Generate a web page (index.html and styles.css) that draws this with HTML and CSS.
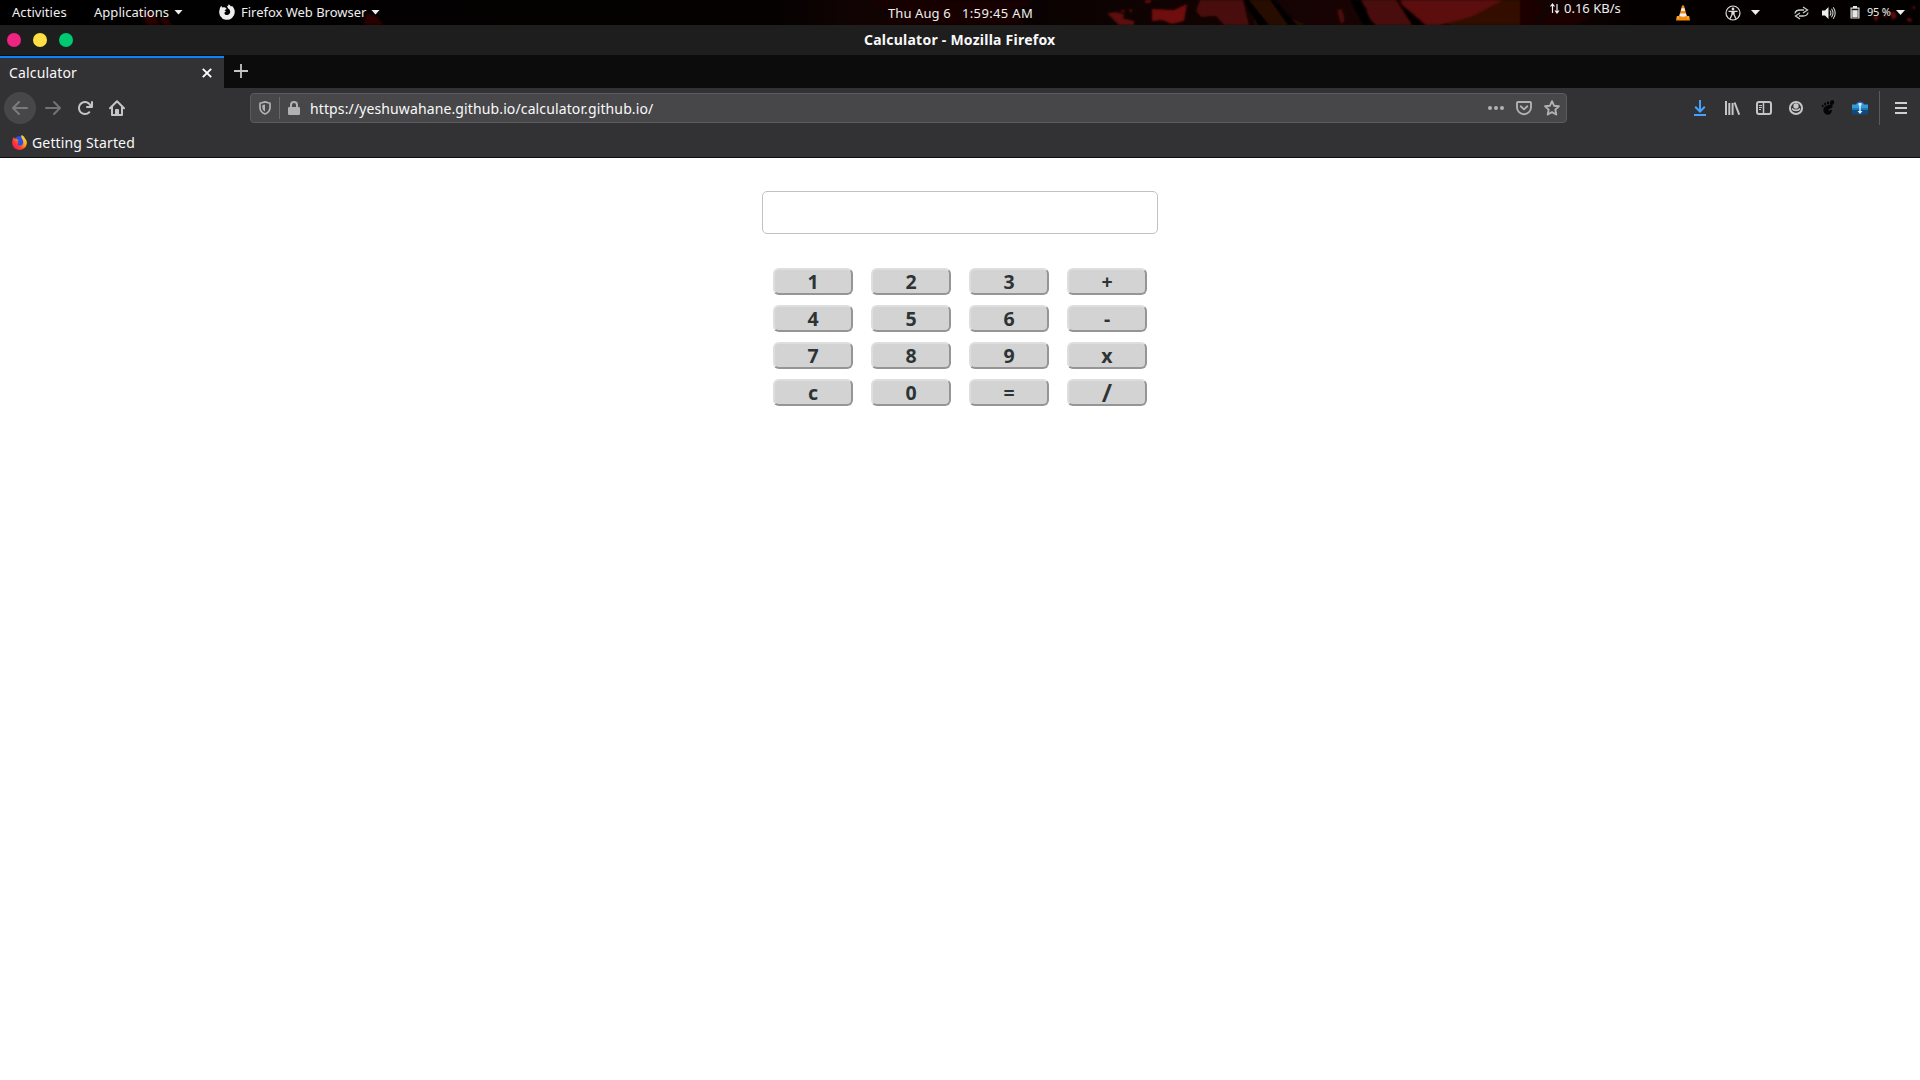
FILE: index.html
```html
<!DOCTYPE html>
<html lang="en">
<head>
<meta charset="utf-8">
<title>Calculator</title>
<link rel="stylesheet" href="styles.css">
</head>
<body>
<header class="panel">
  <svg class="wallpaper" width="1920" height="25" viewBox="0 0 1920 25" aria-hidden="true">
    <defs>
      <linearGradient id="base"><stop offset="0" stop-color="#000"/><stop offset=".4" stop-color="#050101"/><stop offset=".45" stop-color="#120303"/><stop offset=".54" stop-color="#0a0202"/><stop offset=".7" stop-color="#180303"/><stop offset=".79" stop-color="#190404"/><stop offset=".85" stop-color="#050000"/><stop offset="1" stop-color="#030000"/></linearGradient>
      <filter id="soft"><feGaussianBlur stdDeviation=".8"/></filter>
    </defs>
    <rect width="1920" height="25" fill="url(#base)"/>
    <g filter="url(#soft)">
      <path fill="#2a0505" d="M140 10l14 3 6 12h-13zM160 17l8 1 4 7h-9zM366 14l10 2 8 9h-20z"/>
      <path fill="#140302" d="M865 0h170l-20 12 10 13H880l10-12z"/>
      <path fill="#5e0d08" d="M1107 13l10-1 8 3-3 3 12 3v4h-15zM1119 11l6-1-1 3zM1128 10l4-1v4zM1146 0h6l-2 3h-6z"/>
      <path fill="#701009" d="M1152 9l22 1 13-6-3 17-12 3-10-4-10 1z"/>
      <path fill="#4a0b08" d="M1200 0h43l6 25h-25l-8-9-15 1-5-6z"/>
      <path fill="#280906" d="M1245 0h25l10 13 27 12h-52z"/>
      <path fill="#4a0a07" d="M1337 10l5-1 3 11-4 5zM1361 0h35l13 8 8 17h-51l-6-12 8-2z"/>
      <path fill="#5b0d09" d="M1400 0h103l-14 12-28 8-22 5h-23z"/>
      <path fill="#310706" d="M1503 0h17v25h-77l30-9z"/>
      <path fill="#1d0505" d="M1520 0h16l6 9-10 16h-12zM1548 12l30-2 11 8-14 7h-33z"/>
      <path fill="#000" d="M1243 0h6l20 25h-11zM1270 0h5l22 25h-9zM1350 0h11l10 20 5 5h-13zM1396 0l15 12 15 13h-14z"/>
      <path fill="#5a0f0c" d="M1890 12l5 0 2 5-5 3zM1882 16l4-2 1 4zM1911 7l4-1 0 4zM1907 18l4 0 1 4-5-1zM1873 16l6 0-3 6z"/>
    </g>
  </svg>
  <div class="panel-left">
    <span class="t-act">Activities</span>
    <span class="menu-item m-apps"><span class="t-apps">Applications</span><i class="caret"></i></span>
    <span class="menu-item m-fox">
      <svg width="16" height="16" viewBox="0 0 16 16"><path fill="#eee" d="M8 2.400C9 2 9.500 1.300 9.700.3c1 .7 1.700 1.400 2.200 2.300.5-.2.8-.5 1-.9C14.900 3.500 15.800 5.600 15.800 8A7.800 7.800 0 1 1 .7 5.300C.8 3.700 1.500 2.700 2.600 1.700c0 .8.2 1.300.6 1.800 1-.4 2-.5 3-.1L7.800 4.900 5.300 6.300c1 .2 1.500.7 1.500 1.400-1 .5-1.600.9-1.300 1.700.5 1.300 2 2 3.600 1.400 2-.7 2.500-2.900 1.700-4.600C10 4.700 9 4.500 8 2.400z"/></svg>
      <span class="t-fwb">Firefox Web Browser</span><i class="caret"></i>
    </span>
  </div>
  <div class="clock"><span class="t-date">Thu Aug 6</span><span class="t-time">1:59:45 AM</span></div>
  <div class="panel-right">
    <span class="net"><svg width="10" height="11" viewBox="0 0 10 11"><path d="M2.500 10V1M.5 3.500l2-2.500 2 2.500M7 1v9M5 7.500L7 10l2-2.500" fill="none" stroke="#eee" stroke-width="1.200"/></svg><span class="t-net">0.16 KB/s</span></span>
    <svg class="vlc" width="14" height="16" viewBox="0 0 14 16"><path fill="#f58a07" d="M.8 11h12.400l.8 4.500H0z"/><path fill="#ffad36" d="M1 11.500h2v2H1zM11 11.500h2v2h-2z"/><path fill="#f48a12" d="M6 .5h2L11 12q-4 2-8 0z"/><path fill="#eee" d="M5.500 3.200h3L9.200 6H4.800zM4 8.500h6l.7 2.500q-3.700 1.500-7.400 0z"/></svg>
    <svg class="access" width="16" height="16" viewBox="0 0 16 16"><circle cx="8" cy="8" r="7" fill="none" stroke="#ddd" stroke-width="1.200"/><circle cx="8" cy="4" r="1.400" fill="#ddd"/><path d="M3.500 6.300h9M8 6v3.500M7 6.500v3.200l-2 4M9 6.500v3.200l2 4" fill="none" stroke="#ddd" stroke-width="1.300"/></svg>
    <i class="caret c1"></i>
    <svg class="swap" width="15" height="14" viewBox="0 0 15 14"><path d="M1 7.500C1.500 4.500 4 4 6 4h4M9 1l4.500 3L9 7M14 6.500c-.5 3-3 3.500-5 3.500H5M6 7l-4.500 3L6 13" fill="none" stroke="#ccc" stroke-width="1.300"/></svg>
    <svg class="vol" width="14" height="14" viewBox="0 0 14 14"><path d="M0 4.500h3L6.500 1v12L3 9.500H0z" fill="#eee"/><path d="M8 4.500q1.800 2.500 0 5M9.500 2.800q3 4.200 0 8.400M11.200 1.200q4 5.800 0 11.600" fill="none" stroke="#ccc" stroke-width="1.100"/></svg>
    <svg class="bat" width="10" height="13" viewBox="0 0 10 13"><path d="M3 0h4v1.500h2.500v11H.5v-11H3z" fill="#e5e5e5"/><path d="M1.700 2.700h6.600v1.500H1.700z" fill="#111"/><path d="M1.700 2.700h.7v8.800h5.200V2.700h.7v9.300H1.700z" fill="#333"/></svg>
    <span class="t-bat">95 %</span><i class="caret c2"></i>
  </div>
</header>

<div class="titlebar">
  <div class="lights"><i class="close"></i><i class="min"></i><i class="max"></i></div>
  <span class="t-title">Calculator - Mozilla Firefox</span>
</div>

<div class="tabs">
  <div class="tab"><span class="t-tab">Calculator</span><svg width="10" height="10" viewBox="0 0 10 10"><path d="M.8.8l8.400 8.400M9.200.8L.8 9.200" stroke="#fff" stroke-width="1.900"/></svg></div>
  <svg class="newtab" width="14" height="14" viewBox="0 0 14 14"><path d="M7 0v14M0 7h14" stroke="#c5c5c6" stroke-width="1.800"/></svg>
</div>

<div class="toolbar">
  <div class="nav">
    <span class="back"><svg width="16" height="16" viewBox="0 0 16 16"><path fill="#7b7b7d" d="M15 7H3.414l4.293-4.293a1 1 0 0 0-1.414-1.414l-6 6a1 1 0 0 0 0 1.414l6 6a1 1 0 0 0 1.414-1.414L3.414 9H15a1 1 0 0 0 0-2z"/></svg></span>
    <svg class="fwd" width="16" height="16" viewBox="0 0 16 16"><path fill="#737375" d="M1 7h11.586L8.293 2.707a1 1 0 0 1 1.414-1.414l6 6a1 1 0 0 1 0 1.414l-6 6a1 1 0 0 1-1.414-1.414L12.586 9H1a1 1 0 0 1 0-2z"/></svg>
    <svg class="reload" width="16" height="16" viewBox="0 0 16 16"><path fill="#c5c5c6" d="M15 1a1 1 0 0 0-1 1v2.418A6.995 6.995 0 1 0 8 15a6.954 6.954 0 0 0 4.950-2.050 1 1 0 0 0-1.414-1.414A5.019 5.019 0 1 1 12.549 6H10a1 1 0 0 0 0 2h5a1 1 0 0 0 1-1V2a1 1 0 0 0-1-1z"/></svg>
    <svg class="home" width="16" height="16" viewBox="0 0 16 16"><path d="M1 8.300L8 1.300l7 7M3 7v8h10V7M7 15v-5h2v5" fill="none" stroke="#c5c5c6" stroke-width="2" stroke-linecap="round" stroke-linejoin="round"/></svg>
  </div>
  <div class="urlbar">
    <svg class="shield" width="12" height="14" viewBox="0 0 12 14"><path d="M6 .9l5 1.300v4.300c0 3-1.800 5.200-5 6.500-3.200-1.300-5-3.500-5-6.500V2.200z" fill="none" stroke="#b1b1b3" stroke-width="1.700" stroke-linejoin="round"/><path d="M6 3.500v7C4.200 9.400 3.300 8 3.300 6.200V4.100z" fill="#b1b1b3"/></svg>
    <i class="urlsep"></i>
    <svg class="lock" width="12" height="14" viewBox="0 0 12 14"><path d="M3 7V4a3 3 0 0 1 6 0v3" fill="none" stroke="#b1b1b3" stroke-width="2"/><rect y="6" width="12" height="8" rx="1.200" fill="#b1b1b3"/></svg>
    <span class="t-url">https://yeshuwahane.github.io/calculator.github.io/</span>
    <span class="urlicons">
      <svg width="16" height="16" viewBox="0 0 16 16"><g fill="#b1b1b3"><circle cx="2" cy="8" r="2"/><circle cx="8" cy="8" r="2"/><circle cx="14" cy="8" r="2"/></g></svg>
      <svg width="16" height="16" viewBox="0 0 16 16"><path d="M2 2h12q1 0 1 1v4.200a7 7 0 0 1-14 0V3q0-1 1-1z" fill="none" stroke="#b1b1b3" stroke-width="1.900"/><path d="M4.700 6.300L8 9.400l3.300-3.100" fill="none" stroke="#b1b1b3" stroke-width="1.900" stroke-linecap="round" stroke-linejoin="round"/></svg>
      <svg width="16" height="16" viewBox="0 0 16 16"><path d="M8 1.200l2 4.500 4.900.5-3.600 3.400 1 4.900L8 12.100l-4.300 2.400 1-4.900L1.100 6.200 6 5.700z" fill="none" stroke="#b1b1b3" stroke-width="1.900" stroke-linejoin="round"/></svg>
    </span>
  </div>
  <div class="tools">
    <svg width="16" height="16" viewBox="0 0 16 16"><path d="M8 0v11M3.200 6.700L8 11.500l4.800-4.800M2 15h12" fill="none" stroke="#45a1ff" stroke-width="2" /></svg>
    <svg width="16" height="16" viewBox="0 0 16 16"><path d="M2 1v14M5.300 3v12M8.600 3v12" stroke="#c5c5c6" stroke-width="2"/><path d="M10.600 2.500L15.200 14.700" stroke="#c5c5c6" stroke-width="2"/></svg>
    <svg width="16" height="16" viewBox="0 0 16 16"><rect x="1" y="2" width="14" height="12" rx="2" fill="none" stroke="#c5c5c6" stroke-width="2"/><path d="M7.500 2v12" stroke="#c5c5c6" stroke-width="1.500"/><path d="M3 5.500h3M3 7.500h3M3 9.500h2" stroke="#c5c5c6"/></svg>
    <svg width="16" height="16" viewBox="0 0 16 16"><circle cx="8" cy="8" r="6.100" fill="none" stroke="#c5c5c6" stroke-width="2"/><circle cx="8" cy="6" r="2.700" fill="#c5c5c6"/><path d="M4 8.500a4.500 3.600 0 0 0 8 0" fill="none" stroke="#c5c5c6" stroke-width="1.700"/></svg>
    <svg width="16" height="16" viewBox="0 0 16 16"><path fill="#050505" d="M7 5.600c3-1.500 6-.8 5.700 1.200-.3 1.600-2.800 1.500-4 2.700-.8 1 .5 1.500 1.600.7 1-.7 2-.2 1.600.8-.5 2.200-2 3.800-4 3.800-2.500 0-4.500-2.300-4.500-5C3.400 7.800 4.800 6.500 7 5.600z"/><ellipse cx="12" cy="2.600" rx="2" ry="2.600" transform="rotate(25 12 2.600)" fill="#050505"/><ellipse cx="8" cy="2.900" rx="1.100" ry="1.700" fill="#050505"/><ellipse cx="5.100" cy="4.100" rx="1" ry="1.500" fill="#050505"/><ellipse cx="2.700" cy="6" rx=".9" ry="1.300" fill="#050505"/></svg>
    <svg width="16" height="16" viewBox="0 0 16 16"><path fill="#2468d8" d="M4 4a4.200 3.600 0 0 1 8 0v3H4z"/><rect y="5" width="16" height="9.500" rx="1.500" fill="#10497f"/><path fill="#349bd8" d="M0 4.500h4l2-1h5l1 1h4V8H0z"/><path fill="#1978ba" d="M0 8h16v2H0z"/><path fill="#d7f1ff" d="M6.500 3h3v2l-.8 1v5h1.800L8 14l-2.500-3h1.800V6l-.8-1z"/></svg>
  </div>
  <i class="toolsep"></i>
  <svg class="burger" width="12" height="12" viewBox="0 0 12 12"><path d="M0 1h12M0 6h12M0 11h12" stroke="#d0d0d1" stroke-width="2"/></svg>
</div>

<div class="bookmarks">
  <svg width="15" height="15" viewBox="0 0 15 15"><defs><linearGradient id="fx" x1="1" y1="0" x2="0" y2="1"><stop offset="0" stop-color="#fff04a"/><stop offset=".35" stop-color="#ffb01c"/><stop offset=".65" stop-color="#ff3b2f"/><stop offset="1" stop-color="#f00870"/></linearGradient></defs><circle cx="7.500" cy="6.800" r="5.700" fill="#2a50e8"/><path fill="url(#fx)" d="M9.500 0c2 .8 3 1.900 3.300 3.300C14.400 4.800 15 6.500 14.800 8.500c-.4 3.700-3.500 6.400-7.200 6.400C3.500 14.900.2 12 .2 7.800.2 5.500.8 3.500 2 2c.1.900.4 1.500.8 2 1-.3 1.700-.2 2.300.2L6.800 5.700 5 7c1 0 1.500.3 1.600.8-.8.4-1.200.8-.8 1.700.9 1.900 4.400 1.600 5.300-1 .5-1.800-.2-3.300-.9-4.500C9.300 2.700 9 1.500 9.500 0z"/></svg>
  <span class="t-book">Getting Started</span>
</div>

<main class="page">
  <form class="calculator">
    <input class="display" type="text" aria-label="Result">
    <div class="keys">
      <button type="button">1</button><button type="button">2</button><button type="button">3</button><button type="button">+</button>
      <button type="button">4</button><button type="button">5</button><button type="button">6</button><button type="button">-</button>
      <button type="button">7</button><button type="button">8</button><button type="button">9</button><button type="button">x</button>
      <button type="button">c</button><button type="button">0</button><button type="button">=</button><button type="button" class="divide">/</button>
    </div>
  </form>
</main>
</body>
</html>
```
FILE: styles.css
```css
* { box-sizing: border-box; }
body {
  margin: 0;
  height: 1080px;
  display: flex;
  flex-direction: column;
  overflow: hidden;
  background: #fff;
  font-family: "Noto Sans", "Open Sans", sans-serif;
  color: #f9f9fa;
  white-space: nowrap;
}
svg { display: block; flex: none; }

/* desktop panel */
.panel {
  position: relative;
  height: 25px;
  display: grid;
  grid-template-columns: 888px 1fr 371px;
  align-items: center;
  background: #000;
  color: #eee;
  font-size: 13px;
  line-height: 22px;
}
.wallpaper { position: absolute; left: 0; top: 0; }
.panel-left, .clock, .panel-right { position: relative; display: flex; align-items: center; height: 25px; }
.panel-left { padding-left: 12px; }
.panel-left span { padding-bottom: 1px; }
.menu-item { display: flex; align-items: center; }
.caret {
  flex: none;
  width: 9px;
  height: 5px;
  background: #eee;
  clip-path: polygon(0 0, 100% 0, 50% 100%);
}
.t-act { width: 82px; letter-spacing: .05px; }
.m-apps { width: 125px; }
.t-apps { width: 80px; letter-spacing: .03px; }
.t-fwb { width: 125px; margin: 0 5px 0 6px; letter-spacing: -.02px; }
.t-date { width: 74px; letter-spacing: .1px; }
.t-time { letter-spacing: .35px; }
.net { display: flex; align-items: center; width: 116px; gap: 4px; padding-left: 1px; padding-bottom: 9px; }
.vlc { margin: 0 35px 0 11px; }
.access { margin-right: 10px; }
.c1 { margin-right: 34px; }
.swap { margin-right: 13px; }
.vol { margin-right: 14px; }
.bat { margin-right: 7px; }
.t-bat { width: 29px; font-size: 11px; letter-spacing: -.25px; padding-bottom: 1px; }

/* window title */
.titlebar {
  height: 31px;
  display: grid;
  grid-template-columns: 864px 1fr;
  align-items: center;
  background: #1e1e1e;
  border-bottom: 1px solid #0c0c0d;
  font-size: 14px;
  font-weight: 700;
}
.t-title { letter-spacing: .24px; padding-bottom: 2px; }
.lights { display: flex; gap: 12px; padding-left: 7px; }
.lights i { width: 14px; height: 14px; border-radius: 50%; }
.close { background: #ef2382; }
.min { background: #ffdf43; }
.max { background: #00ca71; }

/* tab strip */
.tabs { height: 32px; display: flex; align-items: center; background: #0c0c0d; }
.tab {
  width: 224px;
  height: 32px;
  display: flex;
  align-items: center;
  justify-content: space-between;
  padding: 0 12px 2px 9px;
  background: #323234;
  border-top: 2px solid #0a84ff;
  font-size: 14px;
}
.tab svg { margin-top: 2px; }
.t-tab { letter-spacing: .15px; }
.newtab { margin-left: 10px; margin-bottom: 2px; }

/* navigation toolbar */
.toolbar { height: 39px; display: flex; align-items: center; background: #323234; }
.nav { width: 250px; display: flex; align-items: center; padding-left: 4px; }
.back { width: 32px; height: 32px; display: flex; align-items: center; justify-content: center; border-radius: 50%; background: #474749; }
.fwd { margin-left: 9px; }
.reload { margin-left: 16px; }
.home { margin-left: 16px; }
.urlbar {
  width: 1317px;
  height: 30px;
  display: flex;
  align-items: center;
  background: #474749;
  border: 1px solid #5b5b5d;
  border-radius: 4px;
  font-size: 14px;
}
.shield { margin-left: 8px; }
.urlsep { width: 1px; height: 22px; margin: 0 8px; background: #67676a; }
.lock { margin-right: 10px; }
.t-url { letter-spacing: .12px; padding-top: 2px; }
.urlicons { display: flex; gap: 12px; margin-left: auto; padding-right: 6px; }
.tools { display: flex; gap: 16px; margin-left: 125px; }
.toolsep { width: 1px; height: 34px; margin-left: 11px; background: #5b5b5d; }
.burger { margin-left: 15px; }

/* bookmarks toolbar */
.bookmarks {
  height: 31px;
  display: flex;
  align-items: center;
  gap: 5px;
  padding: 1px 0 0 12px;
  background: #323234;
  border-bottom: 1px solid #0c0c0d;
  font-size: 14px;
}
.t-book { letter-spacing: .15px; }

/* calculator page */
.page { flex: 1; display: flex; justify-content: center; align-items: flex-start; padding-top: 33px; }
.calculator { display: flex; flex-direction: column; align-items: center; gap: 34px; }
.display { width: 396px; height: 43px; border: 1px solid #c4c1bd; border-radius: 5px; background: #fff; }
.keys { display: grid; grid-template-columns: repeat(4, 80px); grid-auto-rows: 27px; gap: 10px 18px; }
.keys button {
  display: flex;
  align-items: center;
  justify-content: center;
  padding: 0;
  border: 2px solid;
  border-color: #dedede #959595 #959595 #dedede;
  border-radius: 6px;
  background: #d3d3d3;
  color: #2e3436;
  font: 700 19.500px/23px "Noto Sans", sans-serif;
}
.keys .divide { font-size: 26px; font-weight: 600; }
```
